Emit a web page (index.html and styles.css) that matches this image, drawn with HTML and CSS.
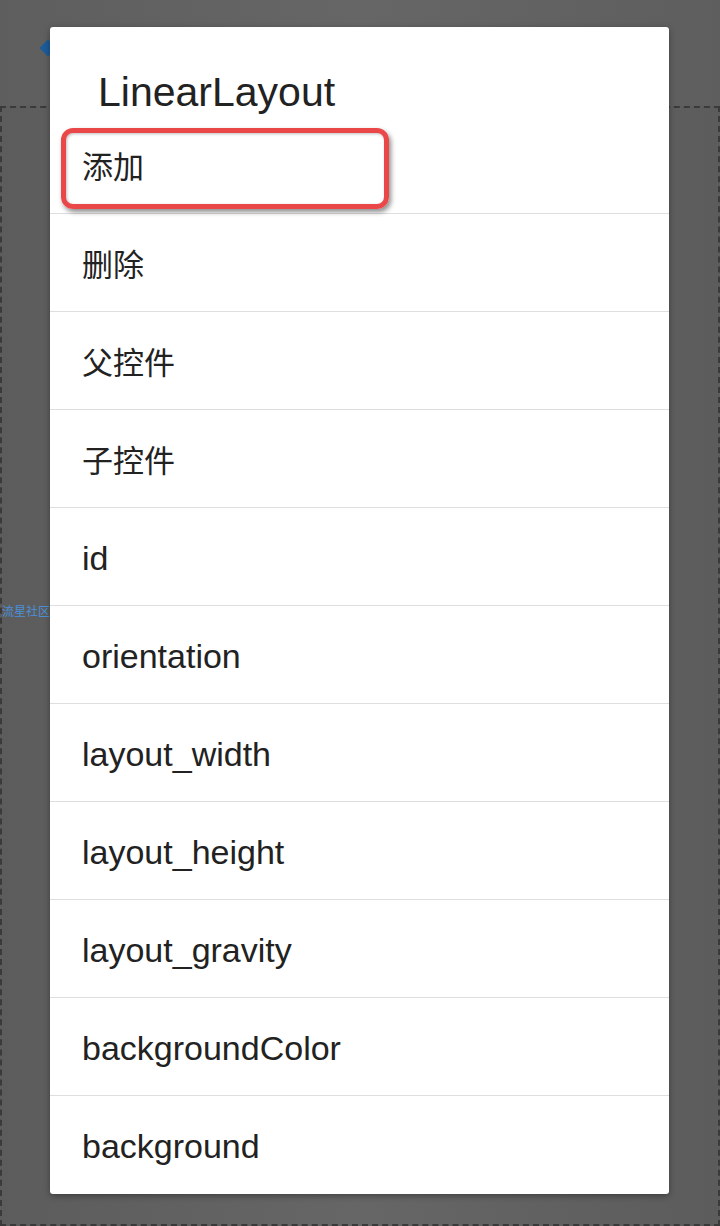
FILE: index.html
```html
<!DOCTYPE html>
<html>
<head>
<meta charset="utf-8">
<link rel="stylesheet" href="styles.css">
</head>
<body>
<div class="page">
  <div class="topbar"><span class="diamond"></span></div>
  <div class="canvas">
    <div class="watermark">流星社区</div>
  </div>
</div>
<div class="dialog">
  <div class="title">LinearLayout</div>
  <ul class="menu">
    <li class="item cjk">添加</li>
    <li class="item cjk">删除</li>
    <li class="item cjk">父控件</li>
    <li class="item cjk">子控件</li>
    <li class="item">id</li>
    <li class="item">orientation</li>
    <li class="item">layout_width</li>
    <li class="item">layout_height</li>
    <li class="item">layout_gravity</li>
    <li class="item">backgroundColor</li>
    <li class="item last">background</li>
  </ul>
  <div class="highlight"></div>
</div>
</body>
</html>
```
FILE: styles.css
```css
html, body {
  margin: 0;
  padding: 0;
}
body {
  width: 720px;
  height: 1226px;
  overflow: hidden;
  background: #606060;
  font-family: "Liberation Sans", "Noto Sans CJK SC", sans-serif;
  position: relative;
}
.page {
  height: 1226px;
  display: flex;
  flex-direction: column;
}
.topbar {
  height: 106px;
  position: relative;
  background: linear-gradient(to right, #5e5e5e, #666 50%, #5e5e5e);
}
.diamond {
  position: absolute;
  left: 42px;
  top: 42px;
  width: 12px;
  height: 12px;
  background: #1c5c99;
  transform: rotate(45deg);
}
.canvas {
  flex: 1;
  border: 2px dashed #3a3a3a;
  background: linear-gradient(to right, #5c5c5c, #666 50%, #5c5c5c);
}
.watermark {
  margin-top: 496px;
  font-size: 12px;
  color: #4a90d9;
  font-family: "Noto Sans CJK SC", sans-serif;
  line-height: 14px;
}
.dialog {
  position: absolute;
  left: 50px;
  top: 27px;
  width: 619px;
  height: 1167px;
  background: #fff;
  border-radius: 3px;
  box-shadow: 0 2px 6px rgba(0,0,0,0.35);
  overflow: hidden;
}
.title {
  height: 47px;
  padding: 42px 0 0 48px;
  font-size: 41px;
  line-height: 47px;
  color: #222;
}
.menu {
  list-style: none;
  margin: 0;
  padding: 0;
}
.item {
  height: 97px;
  border-bottom: 1px solid #dedede;
  padding-left: 32px;
  font-size: 34px;
  line-height: 101px;
  color: #222;
}
.item.cjk {
  font-size: 31px;
  font-family: "Noto Sans CJK SC", sans-serif;
  line-height: 98px;
}
.item.last {
  border-bottom: none;
}
.highlight {
  position: absolute;
  left: 11px;
  top: 101px;
  width: 318px;
  height: 71px;
  border: 5px solid #ea4848;
  border-radius: 12px;
  box-shadow: 2px 3px 5px rgba(0,0,0,0.45), inset 1px 1px 3px rgba(0,0,0,0.25);
}
```
